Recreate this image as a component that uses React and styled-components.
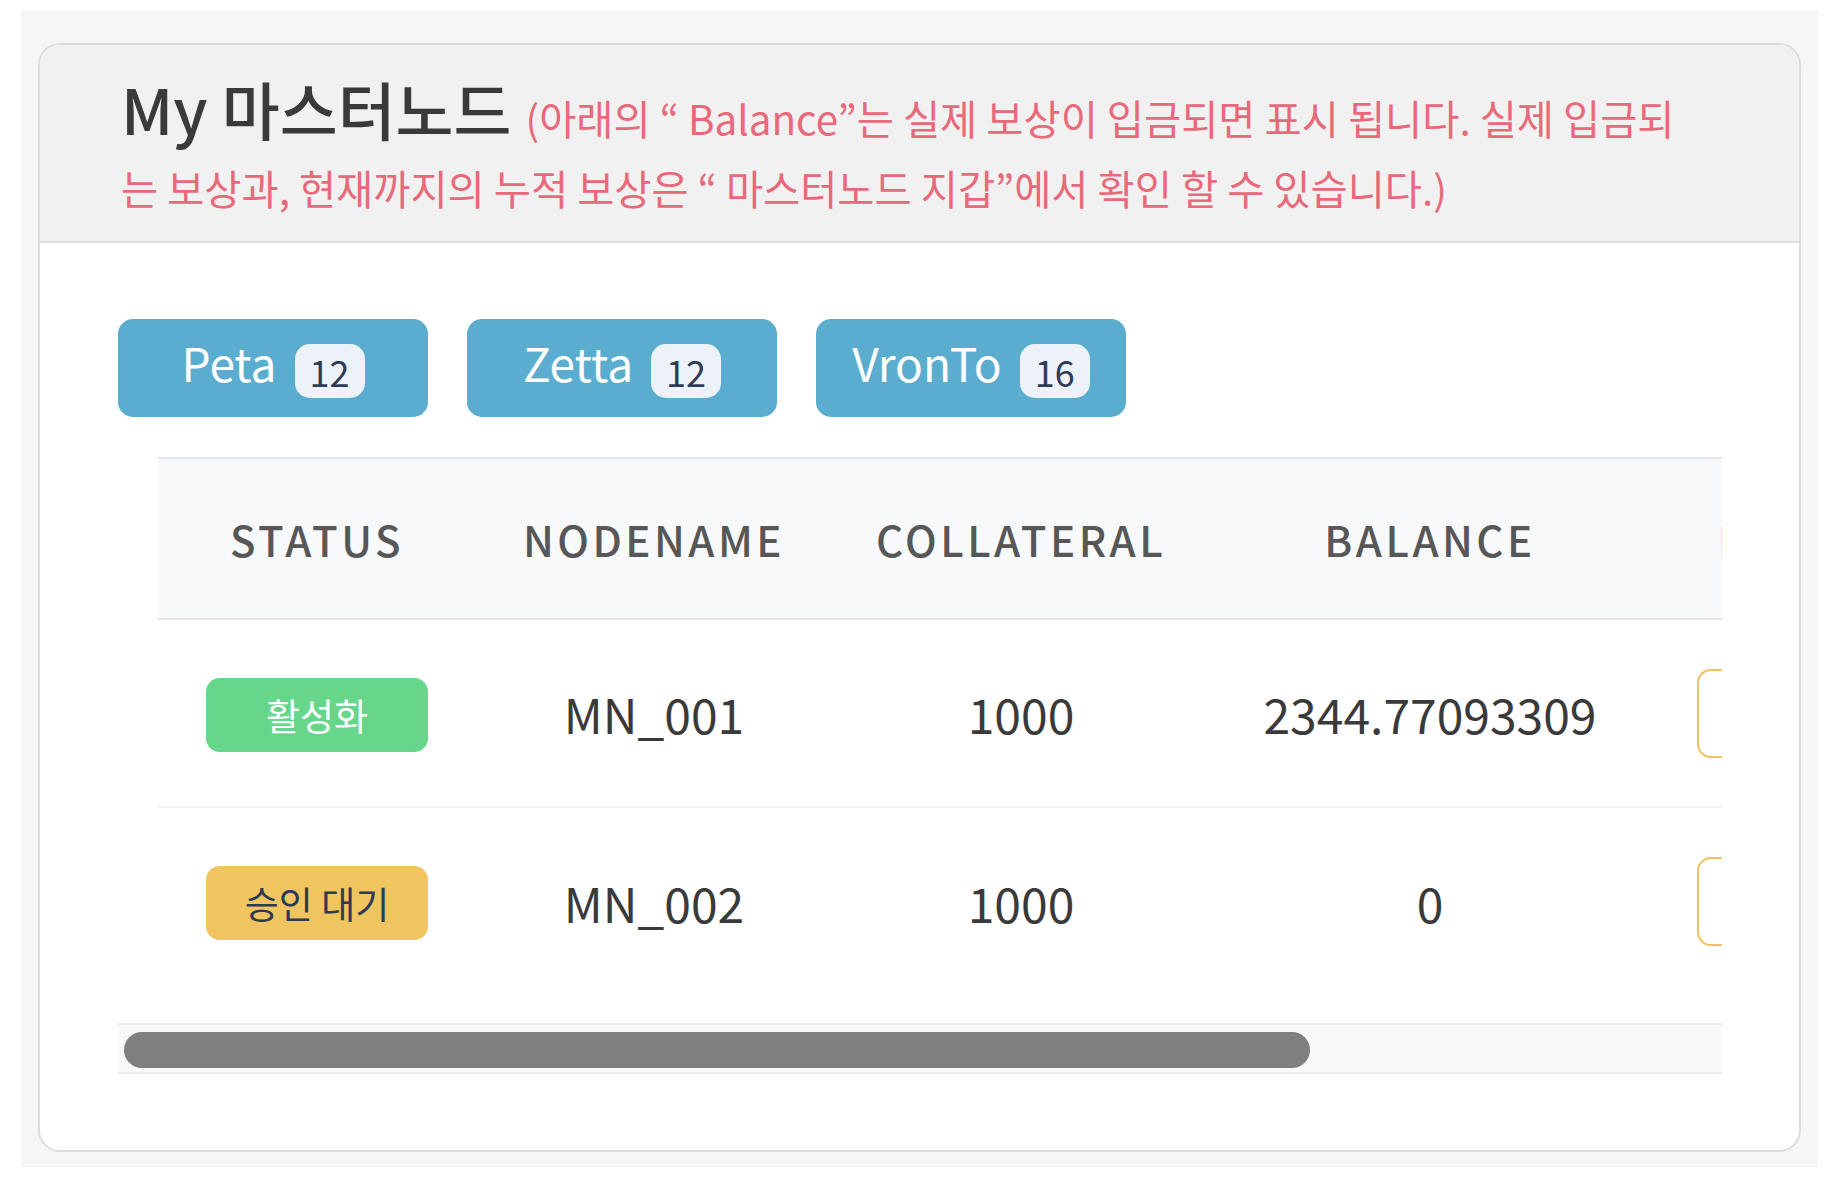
import React from 'react';
import styled, { createGlobalStyle } from 'styled-components';

const GlobalStyle = createGlobalStyle`
  html, body { margin: 0; padding: 0; background: #ffffff; }
  body {
    font-family: "Noto Sans CJK KR", "Noto Sans", sans-serif;
    overflow: hidden;
  }
  *, *::before, *::after { box-sizing: border-box; }
`;

const Frame = styled.div`
  margin: 10px 14px 0 21px;
  padding: 33px 17px 15px 17px;
  background: #f6f6f6;
`;

const Card = styled.section`
  background: #ffffff;
  border: 2px solid #dcdcdc;
  border-radius: 22px;
  overflow: hidden;
`;

const CardHeader = styled.header`
  background: #f1f1f1;
  border-bottom: 2px solid #dedede;
  padding: 28px 108px 28px 81px;
`;

const Title = styled.h2`
  margin: 0;
  font-size: 63px;
  line-height: 70px;
  font-weight: 500;
  color: #3a3a3a;
`;

const Note = styled.span`
  font-size: 40.4px;
  line-height: 1.2;
  font-weight: 400;
  color: #e8697a;
  margin-left: 14px;
`;

const CardBody = styled.div`
  padding: 76px 77px 76px 78px;
`;

const TabRow = styled.div`
  display: flex;
  gap: 39px;
`;

const TabButton = styled.button`
  width: 310px;
  height: 98px;
  display: inline-flex;
  align-items: center;
  justify-content: center;
  gap: 18px;
  padding: 0 0 12px;
  border: none;
  border-radius: 15px;
  background: #5badcf;
  color: #ffffff;
  font-family: inherit;
  font-size: 46px;
  font-weight: 400;
  line-height: 1;
`;

const Count = styled.span`
  display: inline-flex;
  align-items: center;
  justify-content: center;
  height: 54px;
  min-width: 70px;
  padding: 0 15px;
  margin-top: 18px;
  border-radius: 15px;
  background: #edf2f9;
  color: #2f3b57;
  font-size: 36px;
`;

const TableBlock = styled.div`
  margin-top: 40px;
`;

const Viewport = styled.div`
  overflow: hidden;
  padding: 0 0 28px 40px;
`;

const Table = styled.table`
  border-collapse: collapse;
  table-layout: fixed;
  width: ${(p) => p.$width}px;
`;

const Th = styled.th`
  height: 161px;
  padding: 0;
  background: #f8f9fb;
  border-top: 2px solid #e4e6e9;
  border-bottom: 2px solid #e4e6e9;
  color: #575757;
  font-size: 42px;
  font-weight: 500;
  letter-spacing: 3.5px;
  text-align: ${(p) => (p.$left ? 'left' : 'center')};
  padding-left: ${(p) => (p.$left ? '68px' : '0')};
`;

const Tr = styled.tr`
  border-bottom: ${(p) => (p.$last ? 'none' : '2px solid #eef1f6')};
`;

const Td = styled.td`
  height: 188px;
  padding: 0;
  color: #3a3a3a;
  font-size: 48px;
  text-align: ${(p) => (p.$left ? 'left' : 'center')};
  padding-left: ${(p) => (p.$left ? '47px' : '0')};
  vertical-align: middle;
`;

const Status = styled.span`
  display: inline-flex;
  align-items: center;
  justify-content: center;
  width: 222px;
  height: 74px;
  border-radius: 14px;
  font-size: 37px;
  background: ${(p) => (p.$tone === 'active' ? '#66d68a' : '#f0c45f')};
  color: ${(p) => (p.$tone === 'active' ? '#ffffff' : '#2d3a55')};
`;

const OutlineButton = styled.button`
  width: 260px;
  height: 89px;
  border: 2px solid #f0c35f;
  border-radius: 14px;
  background: transparent;
  color: #d9a934;
  font-family: inherit;
  font-size: 34px;
  vertical-align: middle;
`;

const Track = styled.div`
  height: 51px;
  padding: 7px 6px 4px;
  background: #f9f9f9;
  border-top: 2px solid #ececec;
  border-bottom: 2px solid #ececec;
`;

const Thumb = styled.div`
  height: 36px;
  border-radius: 18px;
  background: #7f7f7f;
`;

const tabs = [
  { name: 'Peta', count: 12 },
  { name: 'Zetta', count: 12 },
  { name: 'VronTo', count: 16 },
];

const columns = [
  { key: 'status', label: 'STATUS', width: 318 },
  { key: 'name', label: 'NODENAME', width: 356 },
  { key: 'collateral', label: 'COLLATERAL', width: 378 },
  { key: 'balance', label: 'BALANCE', width: 440 },
  { key: 'detail', label: 'DETAIL', width: 621, left: true },
];

const rows = [
  { status: '활성화', tone: 'active', name: 'MN_001', collateral: '1000', balance: '2344.77093309' },
  { status: '승인 대기', tone: 'pending', name: 'MN_002', collateral: '1000', balance: '0' },
];

const VIEW_WIDTH = 1604;
const LEFT_GAP = 40;

export default function App() {
  const tableWidth = columns.reduce((s, c) => s + c.width, 0);
  const contentWidth = tableWidth + LEFT_GAP;
  const thumbPct = Math.min(100, (VIEW_WIDTH / contentWidth) * 100);

  return (
    <>
      <GlobalStyle />
      <Frame>
        <Card>
          <CardHeader>
            <Title>
              My 마스터노드
              <Note>
                (아래의 “ Balance”는 실제 보상이 입금되면 표시 됩니다. 실제 입금되는 보상과, 현재까지의 누적 보상은 “ 마스터노드 지갑”에서 확인 할 수 있습니다.)
              </Note>
            </Title>
          </CardHeader>
          <CardBody>
            <TabRow>
              {tabs.map((t) => (
                <TabButton key={t.name}>
                  {t.name}
                  <Count>{t.count}</Count>
                </TabButton>
              ))}
            </TabRow>
            <TableBlock>
              <Viewport>
                <Table $width={tableWidth}>
                  <colgroup>
                    {columns.map((c) => (
                      <col key={c.key} style={{ width: c.width }} />
                    ))}
                  </colgroup>
                  <thead>
                    <tr>
                      {columns.map((c) => (
                        <Th key={c.key} $left={c.left}>
                          {c.label}
                        </Th>
                      ))}
                    </tr>
                  </thead>
                  <tbody>
                    {rows.map((r, i) => (
                      <Tr key={r.name} $last={i === rows.length - 1}>
                        <Td>
                          <Status $tone={r.tone}>{r.status}</Status>
                        </Td>
                        <Td>{r.name}</Td>
                        <Td>{r.collateral}</Td>
                        <Td>{r.balance}</Td>
                        <Td $left>
                          <OutlineButton>상세보기</OutlineButton>
                        </Td>
                      </Tr>
                    ))}
                  </tbody>
                </Table>
              </Viewport>
              <Track>
                <Thumb style={{ width: `${thumbPct}%` }} />
              </Track>
            </TableBlock>
          </CardBody>
        </Card>
      </Frame>
    </>
  );
}
